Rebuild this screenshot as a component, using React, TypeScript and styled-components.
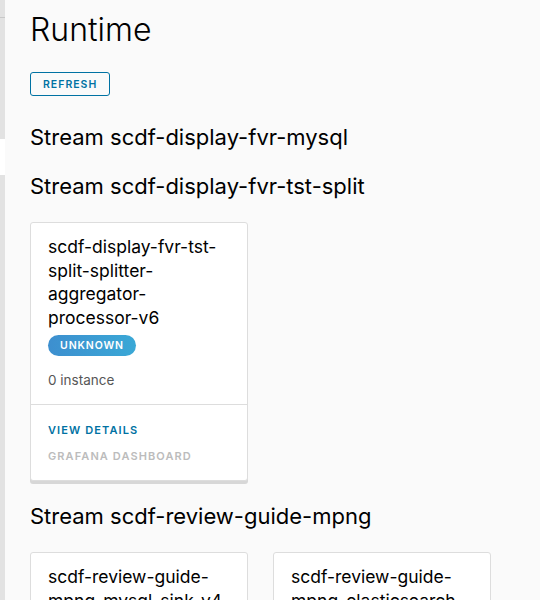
import React from "react";
import styled, { createGlobalStyle } from "styled-components";

const Global = createGlobalStyle`
  html, body { margin: 0; padding: 0; background: #fafafa; }
  body { font-family: Inter, "Open Sans", sans-serif; color: #000; }
`;

const Page = styled.div`
  display: flex;
  height: 600px;
  overflow: hidden;
`;

const Sidebar = styled.div`
  width: 5px;
  flex: none;
  display: flex;
  flex-direction: column;
  background: #e2e2e2;
`;

const SideTop = styled.div`
  height: 17px;
  border-bottom: 1px solid #c8c8c8;
`;

const SideGap = styled.div<{ $h: number }>`
  height: ${(p) => p.$h}px;
`;

const SideActive = styled.div`
  height: 36px;
  background: #ffffff;
`;

const Main = styled.main`
  flex: 1;
  padding: 10px 0 0 25px;
`;

const Title = styled.h1`
  margin: 0;
  font-size: 32px;
  font-weight: 300;
  line-height: 40px;
  color: #000;
`;

const OutlineButton = styled.button`
  display: block;
  margin-top: 22px;
  height: 24px;
  padding: 0 12px;
  border: 1px solid #0072a3;
  border-radius: 3px;
  background: transparent;
  color: #0072a3;
  font-family: inherit;
  font-size: 10.5px;
  font-weight: 600;
  letter-spacing: 1px;
  cursor: pointer;
`;

const StreamSection = styled.section<{ $first?: boolean }>`
  margin-top: ${(p) => (p.$first ? "27px" : "21px")};
`;

const StreamTitle = styled.h2`
  margin: 0;
  font-size: 22px;
  font-weight: 400;
  line-height: 28px;
  color: #000;
`;

const CardGrid = styled.div`
  display: flex;
  gap: 25px;
  margin-top: 22px;
  margin-bottom: 2px;
`;

const Card = styled.div`
  width: 218px;
  box-sizing: border-box;
  background: #fff;
  border: 1px solid #dddddd;
  border-radius: 3px;
  box-shadow: 0 3px 0 0 #d7d7d7;
`;

const CardBlock = styled.div`
  padding: 12px 17px 14px 17px;
`;

const CardTitle = styled.div`
  font-size: 17.5px;
  line-height: 23.5px;
  font-weight: 400;
  color: #000;
`;

const Badge = styled.span`
  display: inline-block;
  margin-top: 6px;
  height: 21px;
  line-height: 21px;
  padding: 0 12px;
  border-radius: 11px;
  background: linear-gradient(90deg, #3d8fcf, #3aa8d6);
  color: #fff;
  font-size: 10.5px;
  font-weight: 600;
  letter-spacing: 0.9px;
`;

const Instance = styled.div`
  margin-top: 14px;
  font-size: 13.5px;
  color: #565656;
  line-height: 20px;
`;

const CardFooter = styled.div`
  border-top: 1px solid #dddddd;
  padding: 18px 17px 16px 17px;
  display: flex;
  flex-direction: column;
  gap: 11px;
`;

const FooterLink = styled.a<{ $disabled?: boolean }>`
  font-size: 11px;
  font-weight: 600;
  letter-spacing: 1.1px;
  line-height: 15px;
  color: ${(p) => (p.$disabled ? "#bcbcbc" : "#0072a3")};
  text-decoration: none;
`;

type Item = { name: string; status?: string; instances?: number };

const streams: { name: string; apps: Item[] }[] = [
  { name: "scdf-display-fvr-mysql", apps: [] },
  {
    name: "scdf-display-fvr-tst-split",
    apps: [
      {
        name: "scdf-display-fvr-tst-split-splitter-aggregator-processor-v6",
        status: "UNKNOWN",
        instances: 0,
      },
    ],
  },
  {
    name: "scdf-review-guide-mpng",
    apps: [
      { name: "scdf-review-guide-mpng-mysql-sink-v4", status: "UNKNOWN", instances: 0 },
      { name: "scdf-review-guide-mpng-elasticsearch-sink-v4", status: "UNKNOWN", instances: 0 },
    ],
  },
];

export default function App() {
  return (
    <>
      <Global />
      <Page>
        <Sidebar>
          <SideTop />
          <SideGap $h={121} />
          <SideActive />
        </Sidebar>
        <Main>
          <Title>Runtime</Title>
          <OutlineButton>REFRESH</OutlineButton>
          {streams.map((s, i) => (
            <StreamSection key={s.name} $first={i === 0}>
              <StreamTitle>Stream {s.name}</StreamTitle>
              {s.apps.length > 0 && (
                <CardGrid>
                  {s.apps.map((a) => (
                    <Card key={a.name}>
                      <CardBlock>
                        <CardTitle>{a.name}</CardTitle>
                        <Badge>{a.status}</Badge>
                        <Instance>{a.instances} instance</Instance>
                      </CardBlock>
                      <CardFooter>
                        <FooterLink href="#">VIEW DETAILS</FooterLink>
                        <FooterLink $disabled>GRAFANA DASHBOARD</FooterLink>
                      </CardFooter>
                    </Card>
                  ))}
                </CardGrid>
              )}
            </StreamSection>
          ))}
        </Main>
      </Page>
    </>
  );
}
